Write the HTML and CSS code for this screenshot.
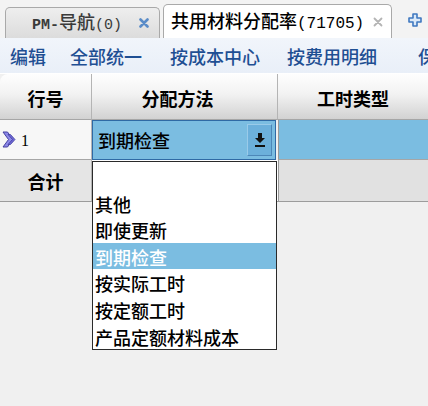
FILE: index.html
```html
<!DOCTYPE html>
<html>
<head>
<meta charset="utf-8">
<link rel="stylesheet" href="styles.css">
</head>
<body>
<div class="app">
  <div class="tabbar">
    <div class="tab tab-off">
      <span class="tab-label"><span class="lat b">PM-</span>导航<span class="lat">(0)</span></span>
      <svg class="x" width="10" height="10" viewBox="0 0 10 10"><path d="M1.5 1.5 L8.5 8.5 M8.5 1.5 L1.5 8.5" stroke="#5a8cc8" stroke-width="2.6" stroke-linecap="round"/></svg>
    </div>
    <div class="tab tab-on">
      <span class="tab-label">共用材料分配率<span class="lat lat2">(71705)</span></span>
      <svg class="x x2" width="10" height="10" viewBox="0 0 10 10"><path d="M1.5 1.5 L8.5 8.5 M8.5 1.5 L1.5 8.5" stroke="#b4b4b4" stroke-width="1.8" stroke-linecap="round"/></svg>
    </div>
    <svg class="plus" width="14" height="14" viewBox="0 0 14 14"><path d="M5 1 H9 V5 H13 V9 H9 V13 H5 V9 H1 V5 H5 Z" fill="#dbe9f8" stroke="#3f78c0" stroke-width="1.6" stroke-linejoin="round"/></svg>
  </div>
  <div class="toolbar">
    <span class="tb">编辑</span>
    <span class="tb">全部统一</span>
    <span class="tb">按成本中心</span>
    <span class="tb">按费用明细</span>
    <span class="tb">保</span>
  </div>
  <div class="grid">
    <div class="hd hd-first">行号</div>
    <div class="hd hd-mid">分配方法</div>
    <div class="hd hd-last">工时类型</div>

    <div class="rn">
      <svg width="15" height="17" viewBox="0 0 15 17"><path d="M1 1 L5.5 1 L11 8.5 L5.5 16 L1 16 L6.5 8.5 Z" fill="#8c88e8" stroke="#45419f" stroke-width="1"/><path d="M6 3.5 L8.5 3.5 L13 8.5 L8.5 13.5 L6 13.5 L10.5 8.5 Z" fill="#6c67d6" stroke="#45419f" stroke-width="0.8"/></svg>
      <span class="num">1</span>
    </div>
    <div class="combo">
      <span class="combo-text">到期检查</span>
      <span class="combo-btn">
        <svg width="12" height="16" viewBox="0 0 12 16"><path d="M4 1 H8 V6 H11 L6 11 L1 6 H4 Z" fill="#111"/><rect x="1" y="13" width="10" height="2" fill="#111"/></svg>
      </span>
    </div>
    <div class="sel"></div>

    <div class="tot">合计</div>
    <div class="tot-mid"></div>
    <div class="tot-last"></div>
  </div>
  <div class="below"></div>

  <ul class="dropdown">
    <li class="opt"></li>
    <li class="opt">其他</li>
    <li class="opt">即使更新</li>
    <li class="opt opt-hl">到期检查</li>
    <li class="opt">按实际工时</li>
    <li class="opt">按定额工时</li>
    <li class="opt">产品定额材料成本</li>
  </ul>
</div>
</body>
</html>
```
FILE: styles.css
```css
* { box-sizing: border-box; }
html, body { margin: 0; padding: 0; }
body {
  width: 428px;
  height: 406px;
  overflow: hidden;
  background: #f0f0f0;
  font-family: "Noto Sans CJK SC", "Noto Sans", sans-serif;
  font-size: 18px;
  font-weight: 500;
  color: #000;
}
.app { position: relative; width: 428px; height: 406px; }

/* tabs */
.tabbar {
  height: 38px;
  background: #f3f3f3;
  display: flex;
  align-items: flex-end;
  padding-left: 5px;
}
.tab {
  display: flex;
  align-items: center;
  border: 1px solid #a9a9a9;
  border-bottom: none;
  border-radius: 5px 5px 0 0;
}
.tab-off {
  width: 155px;
  height: 31px;
  padding-left: 26px;
  background: linear-gradient(#eeeeee, #dcdcdc);
  color: #3a3a3a;
}
.tab-on {
  width: 229px;
  height: 34px;
  margin-left: 3px;
  padding-left: 7px;
  background: #ffffff;
  padding-top: 1px;
}
.tab-label { line-height: 20px; white-space: nowrap; }
.lat { font-family: "Liberation Mono", monospace; font-size: 15px; font-weight: normal; }
.lat2 { font-size: 16px; }
.b { font-weight: bold; }
.x { margin-left: 17px; }
.x2 { margin-left: 9px; }
.plus { margin-left: 16px; margin-bottom: 11px; }

/* toolbar */
.toolbar {
  height: 36px;
  background: linear-gradient(#f1f5fb, #e9eff8);
  display: grid;
  grid-template-columns: 60px 100px 117px 131px 1fr;
  align-items: center;
  padding-left: 10px;
  color: #1f4f93;
  border-bottom: 1px solid #ffffff;
}
.tb { line-height: 22px; white-space: nowrap; }

/* grid */
.grid {
  display: grid;
  grid-template-columns: 92px 186px 150px;
  grid-template-rows: 46px 40px 42px;
}
.hd {
  background: linear-gradient(#fefefe 0%, #f2f2f2 45%, #d2d2d2 100%);
  border-right: 1px solid #b4b4b4;
  border-bottom: 1px solid #a6a6a6;
  display: flex;
  align-items: center;
  justify-content: center;
  font-weight: bold;
  padding-top: 3px;
}
.hd-first { border-top-left-radius: 8px; }
.hd-mid { padding-right: 14px; }
.hd-last { border-right: none; }

.rn {
  background: #f7f7f7;
  border-right: 1px solid #b4b4b4;
  border-bottom: 1px solid #a6a6a6;
  display: flex;
  align-items: center;
  padding-left: 2px;
}
.num {
  font-family: "Liberation Serif", serif;
  font-size: 16px;
  font-weight: normal;
  margin-left: 4px;
  padding-top: 2px;
}
.combo {
  background: #7bbde1;
  border: 1px solid #2f6aa5;
  margin-right: 2px;
  display: flex;
  align-items: center;
  padding-left: 5px;
}
.combo-text { flex: 1; line-height: 22px; }
.combo-btn {
  width: 25px;
  height: 32px;
  margin-right: 3px;
  background: #6cb0db;
  border: 1px solid #4d87b8;
  border-top-color: #9acbe9;
  border-left-color: #9acbe9;
  display: flex;
  align-items: center;
  justify-content: center;
}
.sel {
  background: #7bbde1;
  border-left: 1px solid #9a9a9a;
  border-bottom: 1px solid #a6a6a6;
}
.tot {
  background: #e5e5e5;
  border-right: 1px solid #b4b4b4;
  border-bottom: 1px solid #9c9c9c;
  display: flex;
  align-items: center;
  justify-content: center;
  font-weight: bold;
}
.tot-mid { background: #ffffff; border-bottom: 1px solid #9c9c9c; }
.tot-last {
  background: #e1e1e1;
  border-left: 1px solid #9a9a9a;
  border-bottom: 1px solid #9c9c9c;
}
.below { height: 204px; background: #f0f0f0; }

/* dropdown overlay */
.dropdown {
  position: absolute;
  left: 92px;
  top: 161px;
  width: 185px;
  height: 189px;
  margin: 0;
  padding: 1px 0 0 0;
  list-style: none;
  background: #ffffff;
  border: 1px solid #2a2a2a;
}
.opt {
  height: 26.6px;
  line-height: 26.6px;
  padding-left: 2px;
  white-space: nowrap;
  padding-top: 1px;
}
.opt-hl { background: #7bbde1; color: #ffffff; }
```
